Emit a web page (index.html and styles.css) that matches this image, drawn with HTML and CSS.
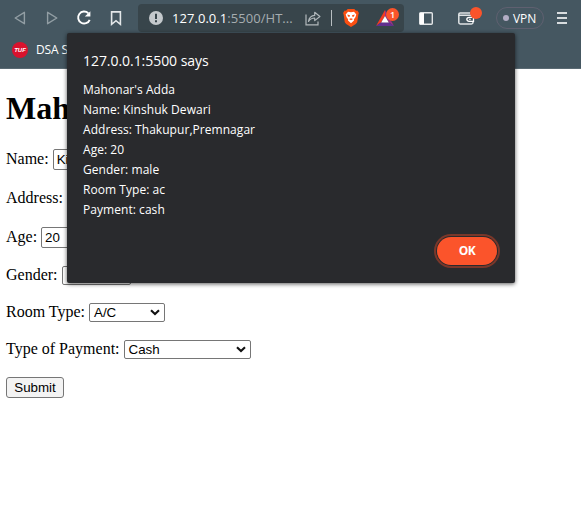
FILE: index.html
```
<!DOCTYPE html>
<html lang="en">
<head>
<meta charset="utf-8">
<title>Mahonar's Adda</title>
<link rel="stylesheet" href="styles.css">
</head>
<body>
<header class="browser">
  <div class="toolbar">
    <div class="nav">
      <svg width="12" height="14" viewBox="0 0 12 14"><path d="M10.4 1.3V12.7L1.2 7Z" fill="none" stroke="#929ea4" stroke-width="1.4" stroke-linejoin="round"/></svg>
      <svg width="12" height="14" viewBox="0 0 12 14"><path d="M1.6 1.3V12.7L10.8 7Z" fill="none" stroke="#929ea4" stroke-width="1.4" stroke-linejoin="round"/></svg>
      <svg width="16" height="16" viewBox="0 0 16 16"><path d="M12.3 3.2A6 6 0 1 0 13.7 9.8" fill="none" stroke="#fff" stroke-width="1.9"/><path d="M14.4 1.3V6.6H8.8Z" fill="#fff"/></svg>
      <svg width="12" height="16" viewBox="0 0 12 16"><path d="M1.6 1.9H10.4V14.3L6 10.7L1.6 14.3Z" fill="none" stroke="#e4e8ea" stroke-width="1.6"/></svg>
    </div>
    <div class="address">
      <svg class="info" width="14" height="14" viewBox="0 0 14 14"><circle cx="7" cy="7" r="7" fill="#c4c9cc"/><path d="M7 2.8V8" stroke="#38454b" stroke-width="2"/><path d="M7 9.3V11.3" stroke="#38454b" stroke-width="2"/></svg>
      <span class="url"><b>127.0.0.1</b>:5500/HT...</span>
      <svg class="share" width="16" height="15" viewBox="0 0 16 15"><path d="M1 3.5V13.8H13V10.5" fill="none" stroke="#b1b8bb" stroke-width="1.2"/><path d="M3.5 10.4C4.1 6.8 6.3 4.7 9.7 4.4V1.3L14.9 5.5L9.7 9.6V7C7 7 5.1 8 3.5 10.4Z" fill="none" stroke="#b1b8bb" stroke-width="1.2" stroke-linejoin="round"/></svg>
      <i class="divider"></i>
      <svg class="lion" width="16" height="18" viewBox="0 0 16 18"><path d="M4.7 0H11.3L13 1.7L14.4 1.6L15.9 4L15.4 5.6L14.2 13.2L12.8 15L8 18L3.2 15L1.8 13.2L.6 5.6L.1 4L1.6 1.6L3 1.7Z" fill="#fb4f12"/><path d="M5 2.8L8 3.3L11 2.8L13.3 5.6L12.4 8.2L10.9 10.2L11 11.5L8 14.3L5 11.5L5.1 10.2L3.6 8.2L2.7 5.6Z" fill="#fff"/><path d="M4.3 5.6L7 6.3L6.4 8L5 7.4ZM11.7 5.6L9 6.3L9.6 8L11 7.4ZM6 10.1L8 9.2L10 10.1L8 11.3Z" fill="#fb4f12"/></svg>
      <span class="bat">
        <svg width="18" height="16" viewBox="0 0 18 16"><path d="M9 0L0 16L5.2 12.2L9 6Z" fill="#f13b23"/><path d="M9 0L18 16L12.8 12.2L9 6Z" fill="#9b2f85"/><path d="M0 16H18L12.8 12.2H5.2Z" fill="#61308f"/><path d="M9 6L12.8 12.4H5.2Z" fill="#fff"/></svg>
        <em>1</em>
      </span>
    </div>
    <svg class="sidebar" width="14" height="13" viewBox="0 0 14 13"><rect x=".7" y=".7" width="12.6" height="11.6" rx="1" fill="none" stroke="#e3e6e8" stroke-width="1.4"/><path d="M1 1H5V12H1Z" fill="#fff"/></svg>
    <span class="wallet">
      <svg width="17" height="14" viewBox="0 0 17 14"><path d="M12 2H2.2Q.8 2 .8 3.2V11.6Q.8 13 2.2 13H13.4Q15 13 15 11.6V5.2Q15 4.2 13.4 4.2H1" fill="none" stroke="#dfe3e5" stroke-width="1.5"/><path d="M15.5 6.3H11.2Q8.8 6.5 8.8 8.2T11.2 10.3H15.5Z" fill="#455761" stroke="#fff" stroke-width="1.3"/><circle cx="11.9" cy="8.4" r=".8" fill="#fff"/></svg>
      <i></i>
    </span>
    <span class="vpn"><i></i>VPN</span>
    <span class="menu"><i></i><i></i><i></i></span>
  </div>
  <div class="bookmarks"><span class="tuf">TUF</span><span class="dsa">DSA S</span></div>
</header>
<main>
  <h1>Mah</h1>
  <form>
    <div class="row"><label>Name:</label><span class="field">Ki</span></div>
    <div class="row"><label>Address:</label><span class="field"></span></div>
    <div class="row"><label>Age:</label><span class="field">20</span></div>
    <div class="row short"><label>Gender:</label><span class="select gender"></span></div>
    <div class="row short"><label>Room Type:</label><span class="select room">A/C<svg width="10" height="7" viewBox="0 0 10 7"><path d="M1 1.2L5 5L9 1.2" fill="none" stroke="#111" stroke-width="2.1"/></svg></span></div>
    <div class="row short"><label>Type of Payment:</label><span class="select payment">Cash<svg width="10" height="7" viewBox="0 0 10 7"><path d="M1 1.2L5 5L9 1.2" fill="none" stroke="#111" stroke-width="2.1"/></svg></span></div>
    <button class="submit" type="button">Submit</button>
  </form>
</main>
<section class="dialog" role="dialog">
  <h2>127.0.0.1:5500 says</h2>
  <div class="message">
    <p>Mahonar's Adda</p>
    <p>Name: Kinshuk Dewari</p>
    <p>Address: Thakupur,Premnagar</p>
    <p>Age: 20</p>
    <p>Gender: male</p>
    <p>Room Type: ac</p>
    <p>Payment: cash</p>
  </div>
  <button class="ok" type="button">OK</button>
</section>
</body>
</html>
```
FILE: styles.css
```
* { box-sizing: border-box; }
body { margin: 0; width: 581px; height: 524px; overflow: hidden; background: #fff; color: #000; font: 16px "Liberation Serif", serif; }
svg { display: block; flex: none; }

.browser { height: 69px; background: #455761; border-bottom: 1px solid #5a6a73; font-family: "Open Sans", "Noto Sans", sans-serif; color: #fff; }
.toolbar { display: flex; align-items: center; height: 36px; padding-left: 14px; }
.nav { display: flex; align-items: center; flex: none; width: 124px; }
.nav svg:nth-child(2) { margin-left: 20px; }
.nav svg:nth-child(3) { margin-left: 18px; }
.nav svg:nth-child(4) { margin-left: 18px; }
.address { display: flex; align-items: center; flex: none; width: 266px; height: 28px; margin-top: 4px; padding-left: 11px; border-radius: 4px; background: #38454b; align-self: flex-start; }
.url { flex: none; width: 132px; margin-left: 9px; font-size: 13px; line-height: 20px; white-space: nowrap; color: #a6adb0; letter-spacing: .05px; }
.url b { font-weight: 400; color: #fff; }
.share { margin-left: 1px; }
.divider { flex: none; width: 1px; height: 16px; margin-left: 10px; background: #b8bfc2; }
.lion { margin-left: 11px; }
.bat { position: relative; margin-left: 17px; }
.bat svg { margin-top: -1px; }
.bat em { position: absolute; left: 10px; top: -3px; width: 13px; height: 13px; border-radius: 50%; background: #fb542b; color: #fff; font: 600 9px/13px "Open Sans", sans-serif; text-align: center; }
.sidebar { margin-left: 15px; }
.wallet { position: relative; margin-left: 25px; }
.wallet i { position: absolute; left: 12px; top: -4px; width: 12px; height: 12px; border-radius: 50%; background: #fb542b; }
.vpn { display: flex; align-items: center; width: 48px; height: 22px; margin-left: 21px; padding-left: 6px; border: 1px solid #5f6070; border-radius: 11px; font-size: 12px; letter-spacing: -.1px; }
.vpn i { width: 6px; height: 6px; margin-right: 4px; border-radius: 50%; background: #b2adc4; }
.menu { display: grid; gap: 3px; width: 10px; margin-left: 13px; }
.menu i { height: 2px; background: #d8dcde; }
.bookmarks { display: flex; align-items: center; height: 27px; padding-left: 12px; }
.tuf { width: 16px; height: 16px; border-radius: 50%; background: #d9122d; font: italic 700 6px/16px "Liberation Sans", sans-serif; text-align: center; }
.dsa { width: 31px; overflow: hidden; white-space: nowrap; margin-left: 8px; font-size: 12px; letter-spacing: -.1px; }

main { padding: 21px 6px 0; }
h1 { margin: 0 0 22px; font-size: 32px; line-height: 37px; }
form { display: grid; gap: 18px; justify-items: start; }
.row { display: flex; align-items: center; height: 21px; white-space: nowrap; }
.row.short { height: 19px; }
label { margin-right: 4px; padding-bottom: 2px; }
.field { width: 153px; height: 21px; padding: 0 3px; border: 1px solid #767676; border-radius: 2px; font: 13.33px/19px "Liberation Sans", sans-serif; }
.select { display: flex; align-items: center; justify-content: space-between; height: 19px; padding: 0 4px; border: 1px solid #767676; border-radius: 2px; font: 13.33px/17px "Liberation Sans", sans-serif; }
.gender { width: 69px; }
.room { width: 76px; }
.payment { width: 127px; }
.submit { width: 58px; height: 21px; padding: 0; border: 1px solid #767676; border-radius: 3px; background: #f3f3f3; color: #000; font: 13.33px/19px "Liberation Sans", sans-serif; }

.dialog { position: absolute; left: 67px; top: 33px; width: 448px; height: 250px; padding: 16px; border-radius: 2px; background: #292a2d; color: #fff; box-shadow: 0 1px 4px rgba(0,0,0,.65); font-family: "Open Sans", "Noto Sans", sans-serif; display: flex; flex-direction: column; }
h2 { margin: 1px 0 9px; font-size: 14px; line-height: 21px; font-weight: 400; letter-spacing: -.05px; }
.message { font-size: 12px; line-height: 20px; letter-spacing: .05px; white-space: nowrap; }
.message p { margin: 0; }
.ok { align-self: flex-end; width: 60px; height: 28px; margin: auto 2px 2px 0; padding: 0; border: 0; border-radius: 14px; background: #fb542b; color: #fff; box-shadow: 0 0 0 1px #292a2d, 0 0 0 3px #79372a; font: 700 12px/28px "Open Sans", sans-serif; letter-spacing: -.6px; }
```
